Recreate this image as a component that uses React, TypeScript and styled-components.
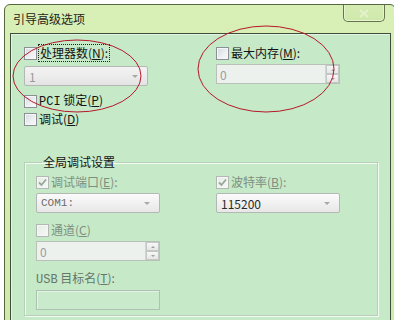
import React from "react";
import styled, { createGlobalStyle } from "styled-components";

const GlobalStyle = createGlobalStyle`
  html, body { margin: 0; padding: 0; background: #ffffff; overflow: hidden; }
  body { font-family: "Noto Sans CJK SC", "Noto Sans", sans-serif; font-size: 12px; }
`;

const Page = styled.div`
  position: relative;
  width: 394px;
  height: 320px;
  overflow: hidden;
`;

const Window = styled.div`
  margin: 4px 0 0 4px;
  width: 392px;
  height: 340px;
  box-sizing: border-box;
  border: 1px solid #56663e;
  border-radius: 6px 6px 0 0;
  background: linear-gradient(180deg, #d8efb6 0%, #d0eaa9 100%);
  display: flex;
  flex-direction: column;
`;

const TitleBar = styled.div`
  display: flex;
  align-items: flex-start;
  height: 28px;
  flex: none;
`;

const Title = styled.div`
  padding-left: 8px;
  line-height: 28px;
  font-size: 12px;
  color: #1e2418;
`;

const CloseButton = styled.div`
  margin-left: auto;
  margin-right: 10px;
  width: 42px;
  height: 17px;
  box-sizing: border-box;
  border: 1px solid #66744e;
  border-top: none;
  border-radius: 0 0 5px 5px;
  background: linear-gradient(180deg, #d4ecb2, #cfe8aa);
  box-shadow: inset 0 -1px 0 #e6f4d2, inset 1px 0 0 #e6f4d2, inset -1px 0 0 #e6f4d2;
  display: flex;
  align-items: center;
  justify-content: center;
`;

const Panel = styled.div`
  flex: 1;
  margin: 0 4px 0 5px;
  border: 1px solid #3e4e3a;
  border-bottom: none;
  background: #c6e9c8;
  box-shadow: inset 1px 1px 0 #e2f4e2;
  padding: 11px 12px 0 13px;
  display: flex;
  flex-direction: column;
`;

const TopGrid = styled.div`
  display: grid;
  grid-template-columns: 124px 124px;
  column-gap: 68px;
  align-items: start;
`;

const Column = styled.div`
  display: flex;
  flex-direction: column;
`;

const CheckRow = styled.div<{ $mt?: number }>`
  display: flex;
  align-items: center;
  height: 16px;
  margin-top: ${(p) => p.$mt ?? 0}px;
  white-space: nowrap;
`;

const Box = styled.span<{ $checked?: boolean; $disabled?: boolean }>`
  width: 13px;
  height: 13px;
  box-sizing: border-box;
  flex: none;
  border: 1px solid ${(p) => (p.$disabled ? "#b2b8b2" : "#8a9094")};
  background: ${(p) =>
    p.$disabled
      ? "linear-gradient(135deg, #e6ece6, #f6f8f6)"
      : "linear-gradient(135deg, #d6dbe0 0%, #eef0f2 60%, #fafafa 100%)"};
  box-shadow: inset 0 0 0 1px #f4f6f8;
  display: flex;
  align-items: center;
  justify-content: center;
`;

const LabelText = styled.span<{ $disabled?: boolean; $focus?: boolean }>`
  margin-left: ${(p) => (p.$focus ? 1 : 2)}px;
  color: ${(p) => (p.$disabled ? "#7f8f80" : "#141414")};
  line-height: 14px;
  padding: ${(p) => (p.$focus ? "1px 1px" : "0")};
  border: ${(p) => (p.$focus ? "1px dotted #222" : "none")};
`;

const Mn = styled.span`
  text-decoration: underline;
`;

const Field = styled.div<{ $mt?: number; $light?: boolean }>`
  height: 20px;
  box-sizing: border-box;
  margin-top: ${(p) => p.$mt ?? 0}px;
  border: 1px solid #b3b8b4;
  border-radius: 2px;
  background: ${(p) =>
    p.$light
      ? "linear-gradient(180deg, #fbfbfb 0%, #f1f1f1 50%, #e7e7e7 100%)"
      : "linear-gradient(180deg, #f3f3f3 0%, #ececec 50%, #e4e4e4 100%)"};
  display: flex;
  align-items: center;
  padding-left: 4px;
  font-size: 12px;
`;

const FieldText = styled.span<{ $tone: "grey" | "mid" | "dark" }>`
  flex: 1;
  color: ${(p) => (p.$tone === "dark" ? "#2a2a2a" : p.$tone === "mid" ? "#6c6c6c" : "#9a9a9a")};
  font-family: ${(p) => (p.$tone === "mid" ? '"Liberation Mono", monospace' : '"Noto Sans CJK SC", sans-serif')};
  font-size: ${(p) => (p.$tone === "mid" ? "11px" : "12px")};
`;

const Arrow = styled.span`
  width: 0;
  height: 0;
  margin-right: 9px;
  border-left: 3.5px solid transparent;
  border-right: 3.5px solid transparent;
  border-top: 3px solid #a8a8a8;
`;

const SpinField = styled.div<{ $mt?: number }>`
  height: 20px;
  box-sizing: border-box;
  margin-top: ${(p) => p.$mt ?? 0}px;
  border: 1px solid #b8c0b8;
  background: #edf1ed;
  display: flex;
  align-items: stretch;
  padding-left: 3px;
`;

const SpinButtons = styled.div`
  width: 13px;
  display: flex;
  flex-direction: column;
  border-left: 1px solid #d0d6d0;
`;

const SpinBtn = styled.div<{ $up?: boolean }>`
  flex: 1;
  display: flex;
  align-items: center;
  justify-content: center;
  background: linear-gradient(180deg, #f7f7f7, #e6e6e6);
  border: 1px solid #c4c8c4;
  &::after {
    content: "";
    border-left: 2px solid transparent;
    border-right: 2px solid transparent;
    ${(p) => (p.$up ? "border-bottom: 2px solid #a0a0a0;" : "border-top: 2px solid #a0a0a0;")}
  }
`;

const SpinValue = styled.span`
  flex: 1;
  align-self: center;
  color: #9c9c9c;
  font-size: 12px;
`;

const Group = styled.fieldset`
  margin: 27px 0 0 0;
  padding: 4px 11px 5px 11px;
  border: 1px solid #b8d0ba;
  box-shadow: inset 1px 1px 0 #f2faf2, 1px 1px 0 #f2faf2;
  min-width: 0;
`;

const Legend = styled.legend`
  margin-left: 6px;
  padding: 0 1px;
  line-height: 16px;
  color: #141414;
  font-size: 12px;
`;

const GroupGrid = styled.div`
  display: grid;
  grid-template-columns: 124px 124px;
  column-gap: 56px;
  align-items: start;
`;

const PlainLabel = styled.div<{ $mt?: number }>`
  height: 16px;
  line-height: 16px;
  margin-top: ${(p) => p.$mt ?? 0}px;
  color: #66766a;
  white-space: nowrap;
`;

const Mono = styled.span`
  font-family: "Liberation Mono", monospace;
  font-size: 12px;
`;

const TextBox = styled.div<{ $mt?: number }>`
  height: 20px;
  box-sizing: border-box;
  margin-top: ${(p) => p.$mt ?? 0}px;
  border: 1px solid #adc2b0;
  background: #c9eacb;
  box-shadow: inset 1px 1px 0 #e4f4e4;
`;

const Annotations = styled.svg`
  position: absolute;
  left: 0;
  top: 0;
  width: 394px;
  height: 320px;
  pointer-events: none;
`;

const Check = () => (
  <svg width="9" height="9" viewBox="0 0 9 9">
    <path d="M1 4.5 L3.5 7 L8 1.5" fill="none" stroke="#98a898" strokeWidth="1.8" />
  </svg>
);

const Combo = ({ text, tone, light, mt }: { text: string; tone: "grey" | "mid" | "dark"; light?: boolean; mt?: number }) => (
  <Field $mt={mt} $light={light}>
    <FieldText $tone={tone}>{text}</FieldText>
    <Arrow />
  </Field>
);

const Spin = ({ mt }: { mt?: number }) => (
  <SpinField $mt={mt}>
    <SpinValue>0</SpinValue>
    <SpinButtons>
      <SpinBtn $up />
      <SpinBtn />
    </SpinButtons>
  </SpinField>
);

export default function App() {
  return (
    <Page>
      <GlobalStyle />
      <Window>
        <TitleBar>
          <Title>引导高级选项</Title>
          <CloseButton>
            <svg width="12" height="9" viewBox="0 0 12 9">
              <path d="M2 1 L10 8 M10 1 L2 8" stroke="#e4f2cc" strokeWidth="2.2" />
            </svg>
          </CloseButton>
        </TitleBar>
        <Panel>
          <TopGrid>
            <Column>
              <CheckRow>
                <Box />
                <LabelText $focus>
                  处理器数(<Mn>N</Mn>):
                </LabelText>
              </CheckRow>
              <Combo text="1" tone="grey" mt={5} />
              <CheckRow $mt={7}>
                <Box />
                <LabelText>
                  <Mono>PCI</Mono> 锁定(<Mn>P</Mn>)
                </LabelText>
              </CheckRow>
              <CheckRow $mt={2}>
                <Box />
                <LabelText>
                  调试(<Mn>D</Mn>)
                </LabelText>
              </CheckRow>
            </Column>
            <Column>
              <CheckRow>
                <Box />
                <LabelText>
                  最大内存(<Mn>M</Mn>):
                </LabelText>
              </CheckRow>
              <Spin mt={3} />
            </Column>
          </TopGrid>
          <Group>
            <Legend>全局调试设置</Legend>
            <GroupGrid>
              <Column>
                <CheckRow>
                  <Box $checked $disabled>
                    <Check />
                  </Box>
                  <LabelText $disabled>
                    调试端口(<Mn>E</Mn>):
                  </LabelText>
                </CheckRow>
                <Combo text="COM1:" tone="mid" light mt={3} />
                <CheckRow $mt={9}>
                  <Box $disabled />
                  <LabelText $disabled>
                    通道(<Mn>C</Mn>)
                  </LabelText>
                </CheckRow>
                <Spin mt={3} />
                <PlainLabel $mt={9}>
                  <Mono>USB</Mono> 目标名(<Mn>T</Mn>):
                </PlainLabel>
                <TextBox $mt={4} />
              </Column>
              <Column>
                <CheckRow>
                  <Box $checked $disabled>
                    <Check />
                  </Box>
                  <LabelText $disabled>
                    波特率(<Mn>B</Mn>):
                  </LabelText>
                </CheckRow>
                <Combo text="115200" tone="dark" light mt={3} />
              </Column>
            </GroupGrid>
          </Group>
        </Panel>
      </Window>
      <Annotations viewBox="0 0 394 320">
        <ellipse cx="77" cy="76" rx="64" ry="36" fill="none" stroke="#b5182a" strokeWidth="1" />
        <ellipse cx="266" cy="69" rx="68" ry="43" fill="none" stroke="#b5182a" strokeWidth="1" />
      </Annotations>
    </Page>
  );
}
